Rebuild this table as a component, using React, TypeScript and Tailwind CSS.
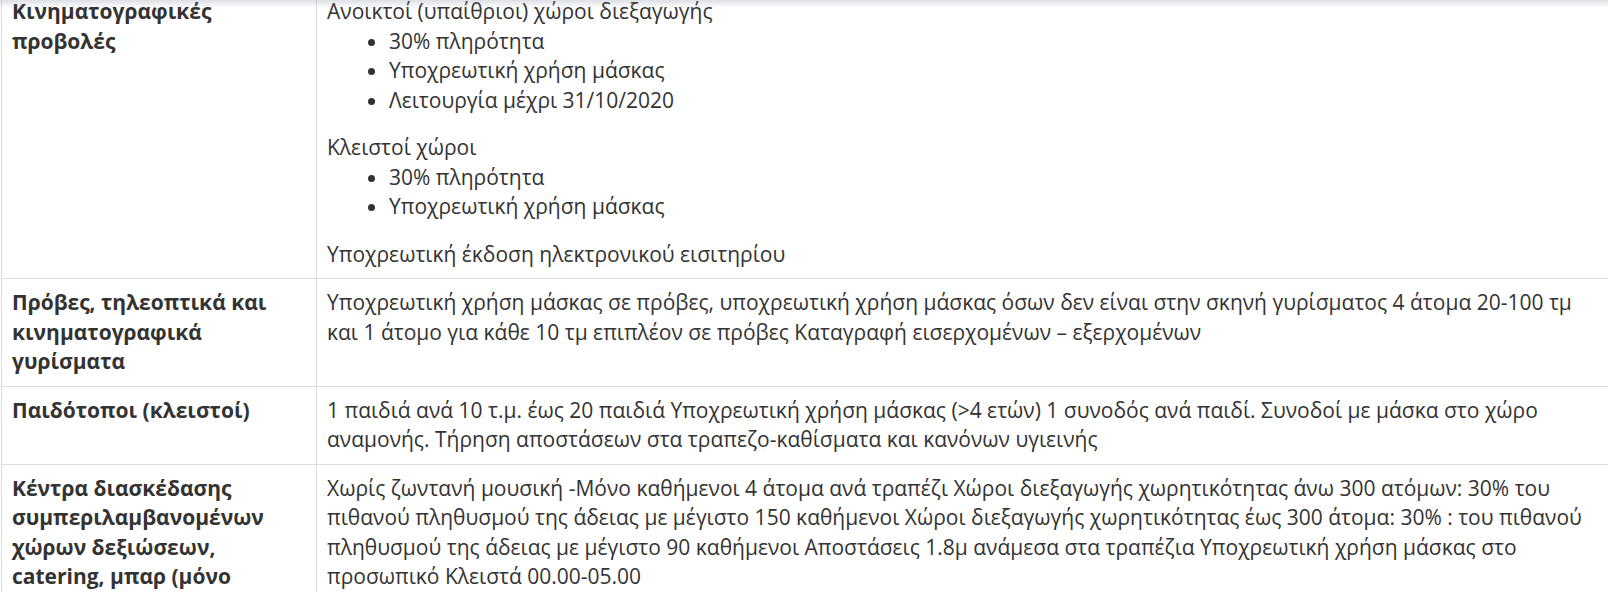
import React from "react";

type Row = {
  label: string;
  body: React.ReactNode;
};

const cell =
  "border border-[#dddddd] align-top px-[10px] py-[9px] text-[21px] leading-[29.5px] text-[#333333] font-['Open_Sans','Noto_Sans',sans-serif]";

const rows: Row[] = [
  {
    label: "Κινηματογραφικές προβολές",
    body: (
      <>
        <p>Ανοικτοί (υπαίθριοι) χώροι διεξαγωγής</p>
        <ul className="list-disc pl-[62px] mb-[18px]">
          <li>30% πληρότητα</li>
          <li>Υποχρεωτική χρήση μάσκας</li>
          <li>Λειτουργία μέχρι 31/10/2020</li>
        </ul>
        <p>Κλειστοί χώροι</p>
        <ul className="list-disc pl-[62px] mb-[18px]">
          <li>30% πληρότητα</li>
          <li>Υποχρεωτική χρήση μάσκας</li>
        </ul>
        <p>Υποχρεωτική έκδοση ηλεκτρονικού εισιτηρίου</p>
      </>
    ),
  },
  {
    label: "Πρόβες, τηλεοπτικά και κινηματογραφικά γυρίσματα",
    body: (
      <p>
        Υποχρεωτική χρήση μάσκας σε πρόβες, υποχρεωτική χρήση μάσκας όσων δεν είναι στην σκηνή γυρίσματος 4 άτομα 20-100 τμ
        <br />
        και 1 άτομο για κάθε 10 τμ επιπλέον σε πρόβες Καταγραφή εισερχομένων – εξερχομένων
      </p>
    ),
  },
  {
    label: "Παιδότοποι (κλειστοί)",
    body: (
      <p>
        1 παιδιά ανά 10 τ.μ. έως 20 παιδιά Υποχρεωτική χρήση μάσκας (&gt;4 ετών) 1 συνοδός ανά παιδί. Συνοδοί με μάσκα στο χώρο αναμονής. Τήρηση αποστάσεων στα τραπεζο-καθίσματα και κανόνων υγιεινής
      </p>
    ),
  },
  {
    label: "Κέντρα διασκέδασης συμπεριλαμβανομένων χώρων δεξιώσεων, catering, μπαρ (μόνο καθήμενοι)",
    body: (
      <p>
        Χωρίς ζωντανή μουσική -Μόνο καθήμενοι 4 άτομα ανά τραπέζι Χώροι διεξαγωγής χωρητικότητας άνω 300 ατόμων: 30% του πιθανού πληθυσμού της άδειας με μέγιστο 150 καθήμενοι Χώροι διεξαγωγής χωρητικότητας έως 300 άτομα: 30% : του πιθανού πληθυσμού της άδειας με μέγιστο 90 καθήμενοι Αποστάσεις 1.8μ ανάμεσα στα τραπέζια Υποχρεωτική χρήση μάσκας στο προσωπικό Κλειστά 00.00-05.00
      </p>
    ),
  },
];

export default function App() {
  return (
    <div className="relative h-[592px] w-[1608px] overflow-hidden bg-white">
      {/* table is scrolled a little, first row cut at the top */}
      <table className="-mt-[13px] ml-[1px] w-[1620px] table-fixed border-collapse">
        <colgroup>
          <col className="w-[315px]" />
          <col />
        </colgroup>
        <tbody>
          {rows.map((r) => (
            <tr key={r.label}>
              <td className={`${cell} font-bold`}>{r.label}</td>
              <td className={cell}>{r.body}</td>
            </tr>
          ))}
        </tbody>
      </table>

      {/* shadow from the sticky header above */}
      <div className="pointer-events-none absolute inset-x-0 top-0 h-[8px] bg-gradient-to-b from-[rgba(120,130,150,0.25)] to-transparent" />
    </div>
  );
}
